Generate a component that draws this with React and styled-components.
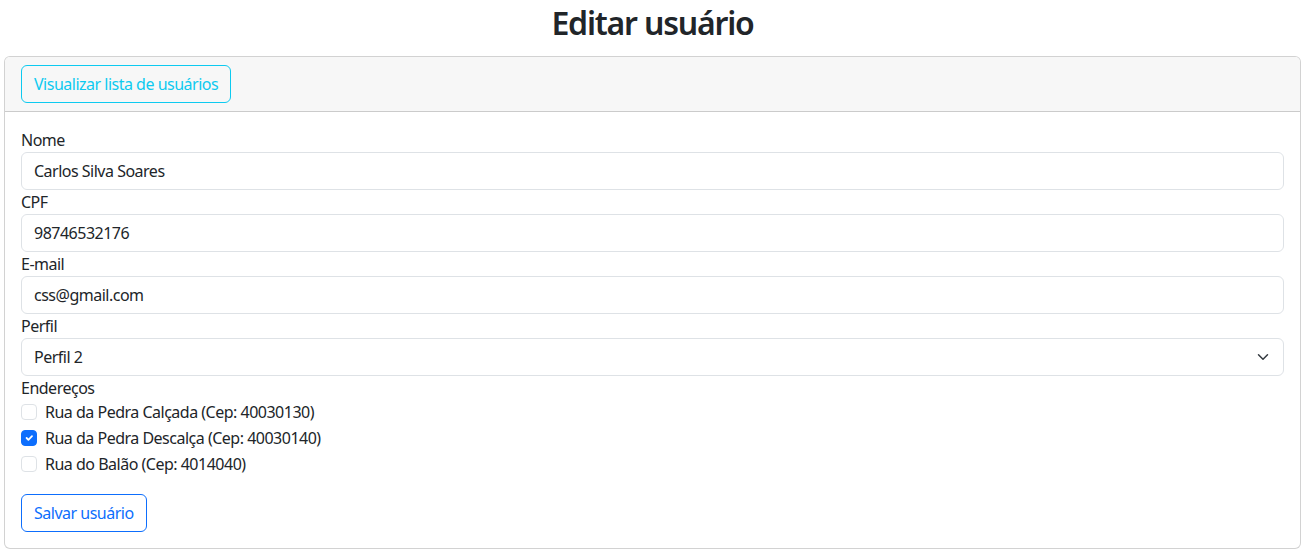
import React, { useState } from 'react';
import styled, { createGlobalStyle } from 'styled-components';

const GlobalStyle = createGlobalStyle`
    *, *::before, *::after { box-sizing: border-box; }
    body {
        margin: 0;
        font-family: "Segoe UI", "Noto Sans", "Liberation Sans", sans-serif;
        font-size: 16px;
        line-height: 1.5;
        letter-spacing: -0.5px;
        color: #212529;
        background: #fff;
    }
`

const Page = styled.div`
    padding: 0 4px;
`

const Title = styled.h2`
    margin: 0 0 10px;
    text-align: center;
    font-size: 32px;
    font-weight: 600;
    line-height: 1.45;
    letter-spacing: -1.2px;
`

const Card = styled.div`
    border: 1px solid rgba(0,0,0,.175);
    border-radius: 6px;
    background: #fff;
    overflow: hidden;
`

const CardHeader = styled.div`
    background: #f7f7f7;
    border-bottom: 1px solid rgba(0,0,0,.175);
    padding: 8px 16px;
`

const CardBody = styled.form`
    padding: 16px;
    display: flex;
    flex-direction: column;
`

const Button = styled.button`
    font-family: inherit;
    font-size: 16px;
    letter-spacing: inherit;
    line-height: 24px;
    padding: 6px 12px;
    border-radius: 6px;
    background: transparent;
    cursor: pointer;
    color: ${p => p.$color};
    border: 1px solid ${p => p.$color};
    align-self: flex-start;
`

const Label = styled.label`
    display: block;
    line-height: 24px;
`

const Input = styled.input`
    display: block;
    width: 100%;
    height: 38px;
    padding: 6px 12px;
    font-family: inherit;
    font-size: 16px;
    letter-spacing: inherit;
    color: #212529;
    border: 1px solid #dee2e6;
    border-radius: 6px;
    outline: none;
`

const SelectWrap = styled.div`
    position: relative;
`

const Select = styled.select`
    display: block;
    width: 100%;
    height: 38px;
    padding: 6px 36px 6px 12px;
    font-family: inherit;
    font-size: 16px;
    letter-spacing: inherit;
    color: #212529;
    background: #fff;
    border: 1px solid #dee2e6;
    border-radius: 6px;
    appearance: none;
    outline: none;
`

const Chevron = styled.svg`
    position: absolute;
    right: 15px;
    top: 13px;
    pointer-events: none;
`

const CheckRow = styled.label`
    display: flex;
    align-items: center;
    gap: 8px;
    min-height: 24px;
    margin-bottom: 2px;
    line-height: 24px;
`

const Box = styled.span`
    width: 16px;
    height: 16px;
    border-radius: 4px;
    border: 1px solid ${p => p.$checked ? '#0d6efd' : '#dee2e6'};
    background: ${p => p.$checked ? '#0d6efd' : '#fff'};
    display: flex;
    align-items: center;
    justify-content: center;
    flex-shrink: 0;
`

const HiddenCheck = styled.input`
    display: none;
`

const Footer = styled.div`
    margin-top: 16px;
    display: flex;
`

const enderecos = [
    { id: 1, rua: 'Rua da Pedra Calçada', cep: '40030130' },
    { id: 2, rua: 'Rua da Pedra Descalça', cep: '40030140' },
    { id: 3, rua: 'Rua do Balão', cep: '4014040' },
]

function App() {
    const [selecionados, setSelecionados] = useState([2]);

    const toggle = (id) => {
        setSelecionados(s => s.includes(id) ? s.filter(x => x !== id) : [...s, id]);
    }

    return (
        <>
        <GlobalStyle/>
        <Page>
            <Title>Editar usuário</Title>
            <Card>
                <CardHeader>
                    <Button type="button" $color="#0dcaf0">Visualizar lista de usuários</Button>
                </CardHeader>
                <CardBody onSubmit={e => e.preventDefault()}>
                    <Label>Nome</Label>
                    <Input defaultValue="Carlos Silva Soares"/>
                    <Label>CPF</Label>
                    <Input defaultValue="98746532176"/>
                    <Label>E-mail</Label>
                    <Input defaultValue="css@gmail.com"/>
                    <Label>Perfil</Label>
                    <SelectWrap>
                        <Select defaultValue="2">
                            <option value="1">Perfil 1</option>
                            <option value="2">Perfil 2</option>
                        </Select>
                        <Chevron width="12" height="12" viewBox="0 0 16 16">
                            <path d="M2 5l6 6 6-6" fill="none" stroke="#343a40" strokeWidth="2" strokeLinecap="round" strokeLinejoin="round"/>
                        </Chevron>
                    </SelectWrap>
                    <Label>Endereços</Label>
                    {enderecos.map(e => {
                        const checked = selecionados.includes(e.id);
                        return (
                            <CheckRow key={e.id}>
                                <HiddenCheck type="checkbox" checked={checked} onChange={() => toggle(e.id)}/>
                                <Box $checked={checked}>
                                    {checked && (
                                        <svg width="12" height="12" viewBox="0 0 20 20">
                                            <path d="M6 10l3 3 6-6" fill="none" stroke="#fff" strokeWidth="3" strokeLinecap="round" strokeLinejoin="round"/>
                                        </svg>
                                    )}
                                </Box>
                                {e.rua} (Cep: {e.cep})
                            </CheckRow>
                        )
                    })}
                    <Footer>
                        <Button type="submit" $color="#0d6efd">Salvar usuário</Button>
                    </Footer>
                </CardBody>
            </Card>
        </Page>
        </>
    )
}

export default App;
